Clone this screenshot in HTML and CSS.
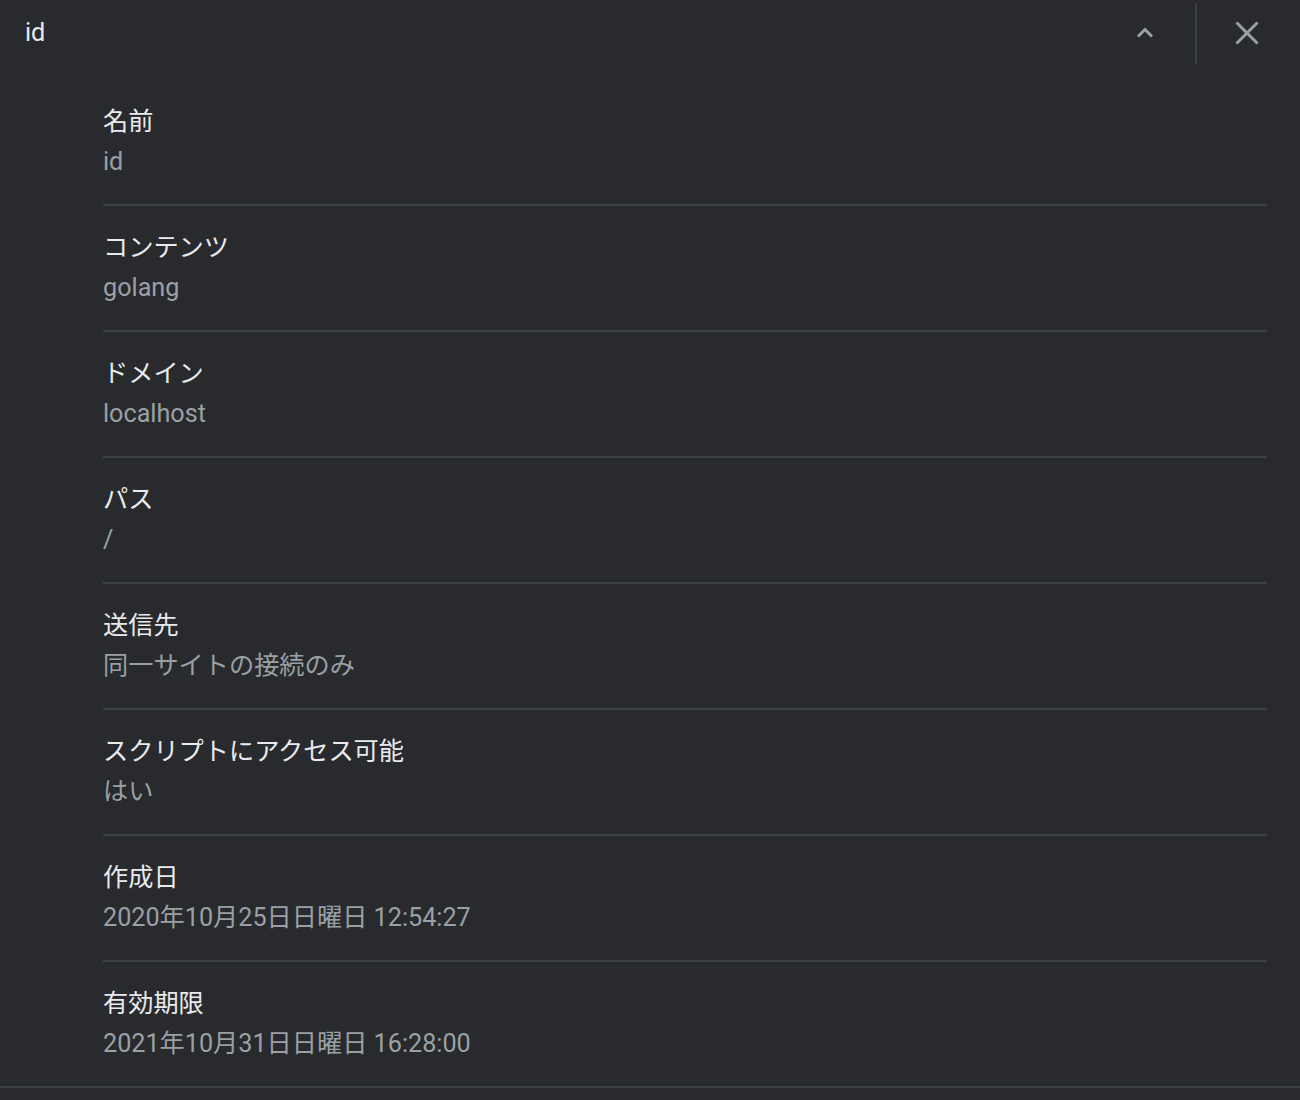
FILE: index.html
```html
<!DOCTYPE html>
<html lang="ja">
<head>
<meta charset="utf-8">
<title>id</title>
<link rel="stylesheet" href="styles.css">
</head>
<body>
<div class="panel">
  <header class="header">
    <div class="title">id</div>
    <div class="actions">
      <button class="icon-btn" aria-label="折りたたむ">
        <svg width="24" height="24" viewBox="0 0 24 24"><path d="M5 15.5 L12 8.5 L19 15.5" fill="none" stroke="#9aa0a6" stroke-width="3"/></svg>
      </button>
      <span class="vdivider"></span>
      <button class="icon-btn" aria-label="閉じる">
        <svg width="26" height="26" viewBox="0 0 26 26"><path d="M2.5 2.5 L23.5 23.5 M23.5 2.5 L2.5 23.5" fill="none" stroke="#9aa0a6" stroke-width="3"/></svg>
      </button>
    </div>
  </header>
  <div class="fields">
    <div class="field"><div class="label">名前</div><div class="value">id</div></div>
    <div class="field"><div class="label">コンテンツ</div><div class="value">golang</div></div>
    <div class="field"><div class="label">ドメイン</div><div class="value">localhost</div></div>
    <div class="field"><div class="label">パス</div><div class="value">/</div></div>
    <div class="field"><div class="label">送信先</div><div class="value">同一サイトの接続のみ</div></div>
    <div class="field"><div class="label">スクリプトにアクセス可能</div><div class="value">はい</div></div>
    <div class="field"><div class="label">作成日</div><div class="value">2020年10月25日日曜日 12:54:27</div></div>
    <div class="field"><div class="label">有効期限</div><div class="value">2021年10月31日日曜日 16:28:00</div></div>
  </div>
</div>
</body>
</html>
```

FILE: styles.css
```css
html, body {
  margin: 0;
  padding: 0;
  background: #292a2d;
}
body {
  font-family: Roboto, "Noto Sans CJK JP", sans-serif;
  font-size: 25.2px;
  color: #e8eaed;
  min-height: 1100px;
}
.header {
  height: 66px;
  display: flex;
  align-items: center;
  justify-content: space-between;
  padding-left: 25px;
  padding-right: 29px;
}
.title {
  color: #e8eaed;
  line-height: 30px;
}
.actions {
  display: flex;
  align-items: center;
}
.icon-btn {
  width: 48px;
  height: 48px;
  border: 0;
  padding: 0;
  background: transparent;
  display: flex;
  align-items: center;
  justify-content: center;
}
.icon-btn svg {
  display: block;
}
.vdivider {
  width: 2px;
  height: 61px;
  background: #3c4043;
  margin: 0 26px;
}
.fields {
  padding: 14px 33px 0 103px;
  border-bottom: 2px solid #3c4043;
}
.field {
  padding: 22px 0 22px;
}
.field + .field {
  border-top: 2px solid #3c4043;
}
.label {
  line-height: 40px;
  color: #e8eaed;
}
.value {
  line-height: 40px;
  color: #9aa0a6;
}
```
